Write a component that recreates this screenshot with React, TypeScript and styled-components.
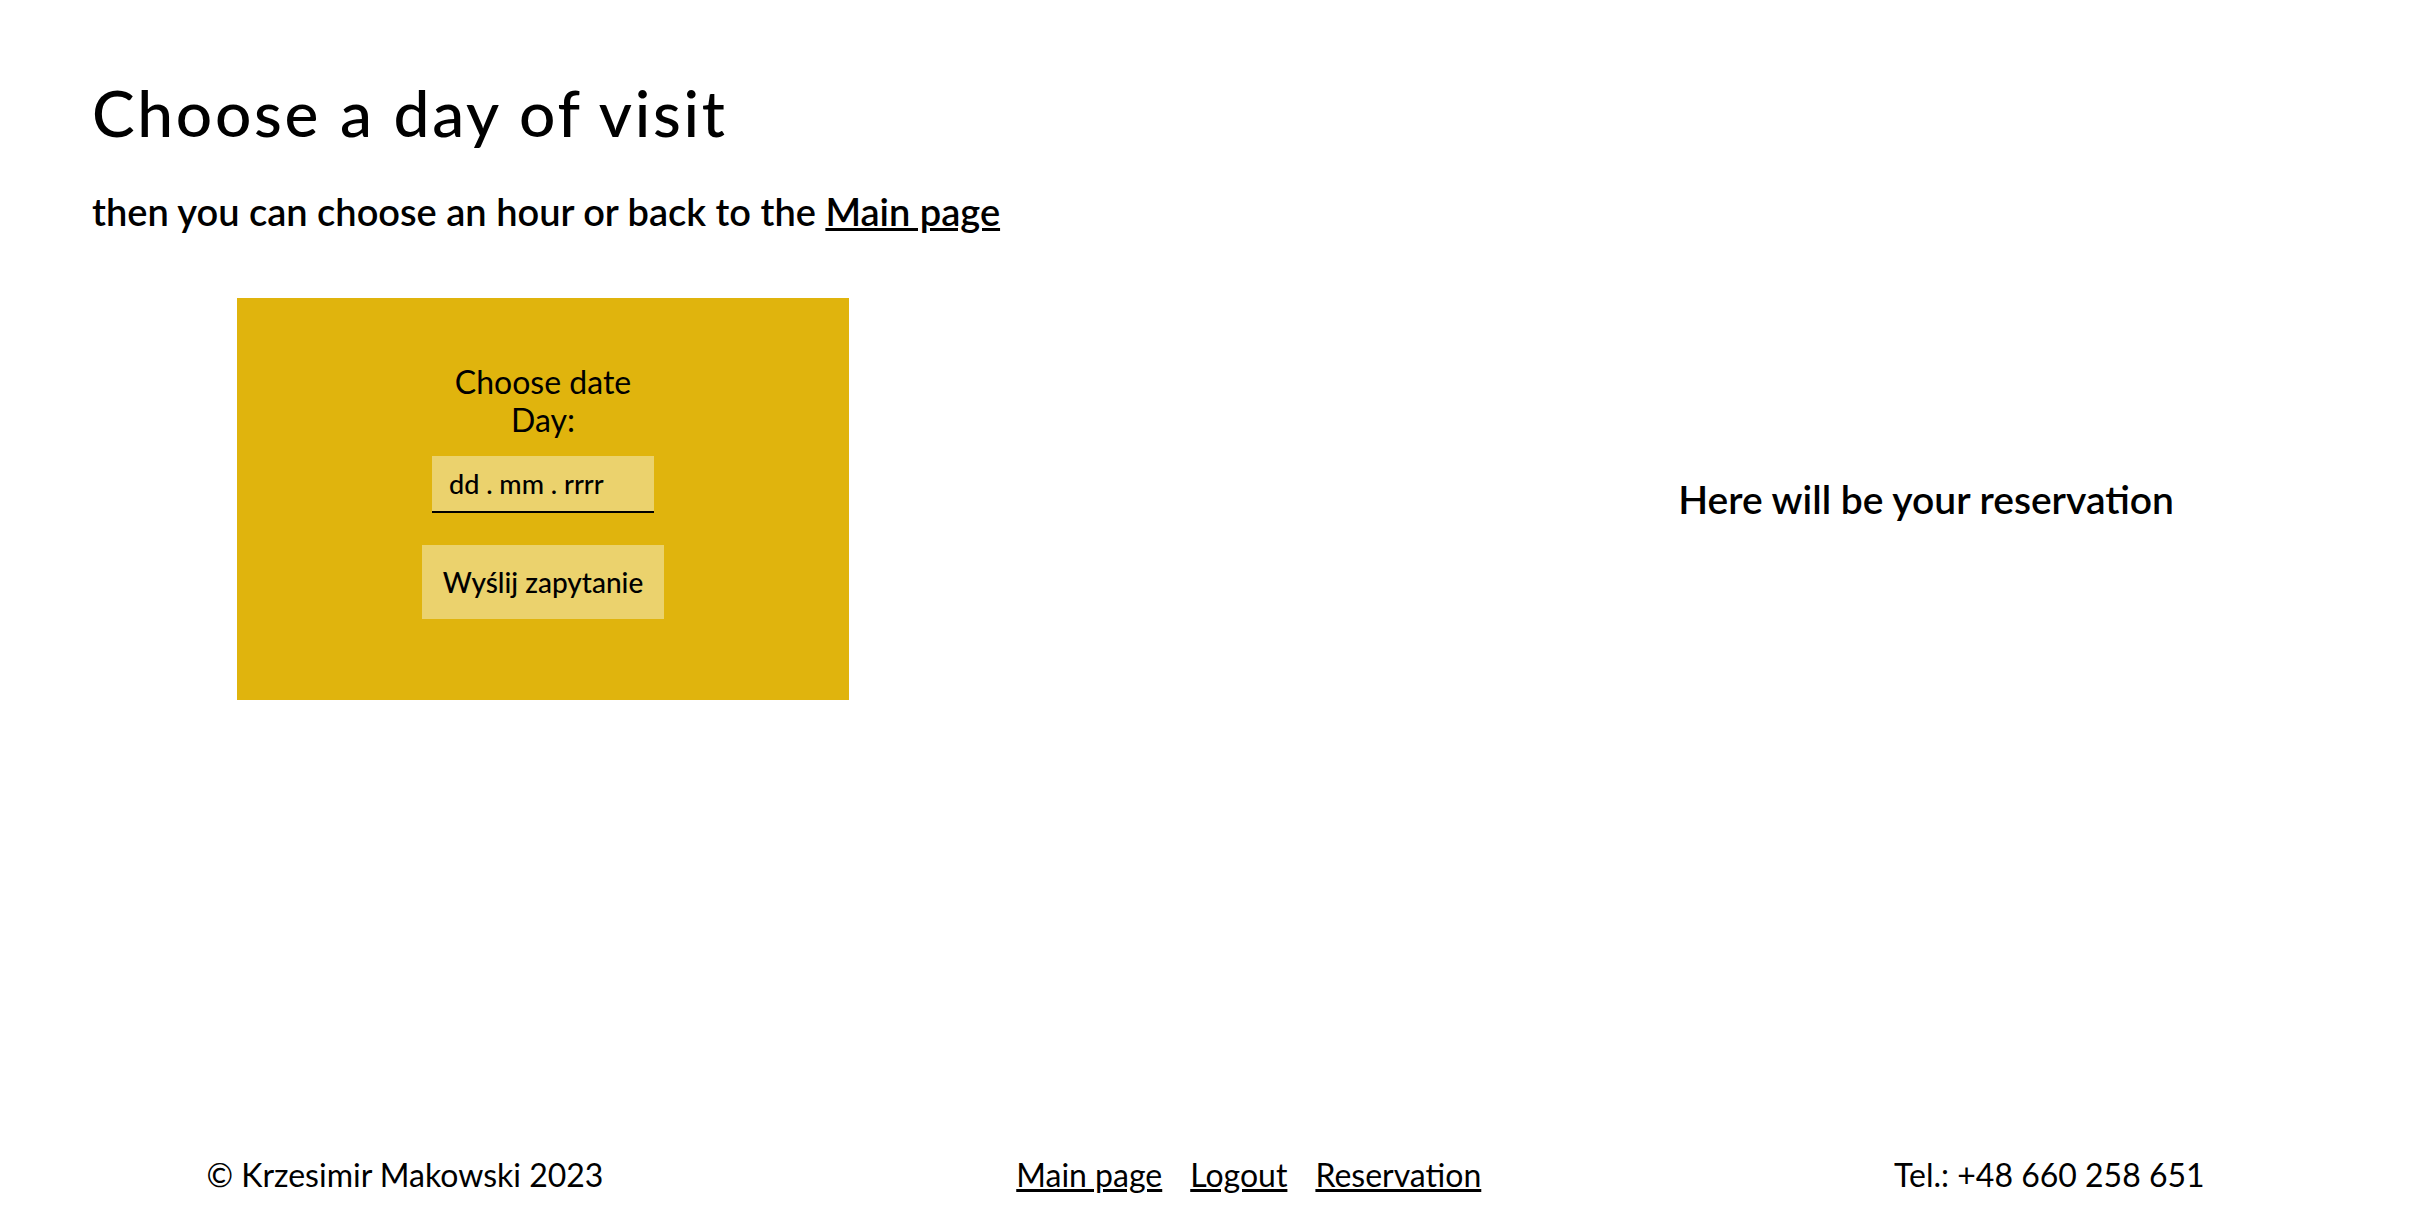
import React from "react";
import styled, { createGlobalStyle } from "styled-components";

const GlobalStyle = createGlobalStyle`
  html, body {
    margin: 0;
    padding: 0;
    background: #ffffff;
  }
  body {
    font-family: Lato, "Open Sans", sans-serif;
    color: #000000;
  }
  * { box-sizing: border-box; }
`;

const Page = styled.div`
  min-height: 100vh;
  display: flex;
  flex-direction: column;
`;

const Header = styled.header`
  padding: 74px 92px 0;
`;

const Title = styled.h1`
  margin: 0;
  font-size: 64px;
  font-weight: 500;
  letter-spacing: 0.042em;
  line-height: normal;
`;

const Subtitle = styled.p`
  margin: 37px 0 0;
  font-size: 38px;
  font-weight: 600;
  line-height: normal;
`;

const InlineLink = styled.a`
  color: #000000;
  text-decoration: underline;
`;

const Main = styled.main`
  display: flex;
  justify-content: space-between;
  align-items: center;
  padding: 0 237px;
  margin-top: 64px;
`;

const FormCard = styled.form`
  width: 612px;
  height: 402px;
  background: #e0b40d;
  display: flex;
  flex-direction: column;
  align-items: center;
  padding-top: 65px;
`;

const FieldLabel = styled.label`
  display: flex;
  flex-direction: column;
  align-items: center;
  font-size: 32px;
  line-height: 38.4px;
  text-align: center;
`;

const DateInput = styled.input`
  margin-top: 16px;
  width: 222px;
  height: 57px;
  border: none;
  border-bottom: 2px solid #000000;
  background: #ebd26d;
  font-family: Lato, sans-serif;
  font-size: 27px;
  font-weight: 500;
  padding: 0 0 0 17px;
  color: #000000;
  outline: none;
  &::placeholder {
    color: #000000;
    opacity: 1;
  }
`;

const SubmitButton = styled.button`
  margin-top: 32px;
  width: 242px;
  height: 74px;
  border: none;
  background: #ebd26d;
  font-family: Lato, sans-serif;
  font-size: 28px;
  font-weight: 500;
  color: #000000;
  cursor: pointer;
`;

const Reservation = styled.h3`
  margin: 0;
  font-size: 39px;
  font-weight: 600;
  line-height: normal;
`;

const Footer = styled.footer`
  margin-top: auto;
  display: flex;
  justify-content: space-around;
  align-items: center;
  padding-bottom: 16px;
  font-size: 32px;
  line-height: normal;
`;

const FooterText = styled.span``;

const FooterNav = styled.nav`
  display: flex;
  gap: 28px;
`;

const FooterLink = styled.a`
  color: #000000;
  text-decoration: underline;
`;

export default function App() {
  return (
    <>
      <GlobalStyle />
      <Page>
        <Header>
          <Title>Choose a day of visit</Title>
          <Subtitle>
            then you can choose an hour or back to the <InlineLink href="#">Main page</InlineLink>
          </Subtitle>
        </Header>
        <Main>
          <FormCard onSubmit={(e) => e.preventDefault()}>
            <FieldLabel>
              <span>Choose date</span>
              <span>Day:</span>
            </FieldLabel>
            <DateInput type="text" placeholder="dd . mm . rrrr" />
            <SubmitButton type="submit">Wyślij zapytanie</SubmitButton>
          </FormCard>
          <Reservation>Here will be your reservation</Reservation>
        </Main>
        <Footer>
          <FooterText>© Krzesimir Makowski 2023</FooterText>
          <FooterNav>
            <FooterLink href="#">Main page</FooterLink>
            <FooterLink href="#">Logout</FooterLink>
            <FooterLink href="#">Reservation</FooterLink>
          </FooterNav>
          <FooterText>Tel.: +48 660 258 651</FooterText>
        </Footer>
      </Page>
    </>
  );
}
